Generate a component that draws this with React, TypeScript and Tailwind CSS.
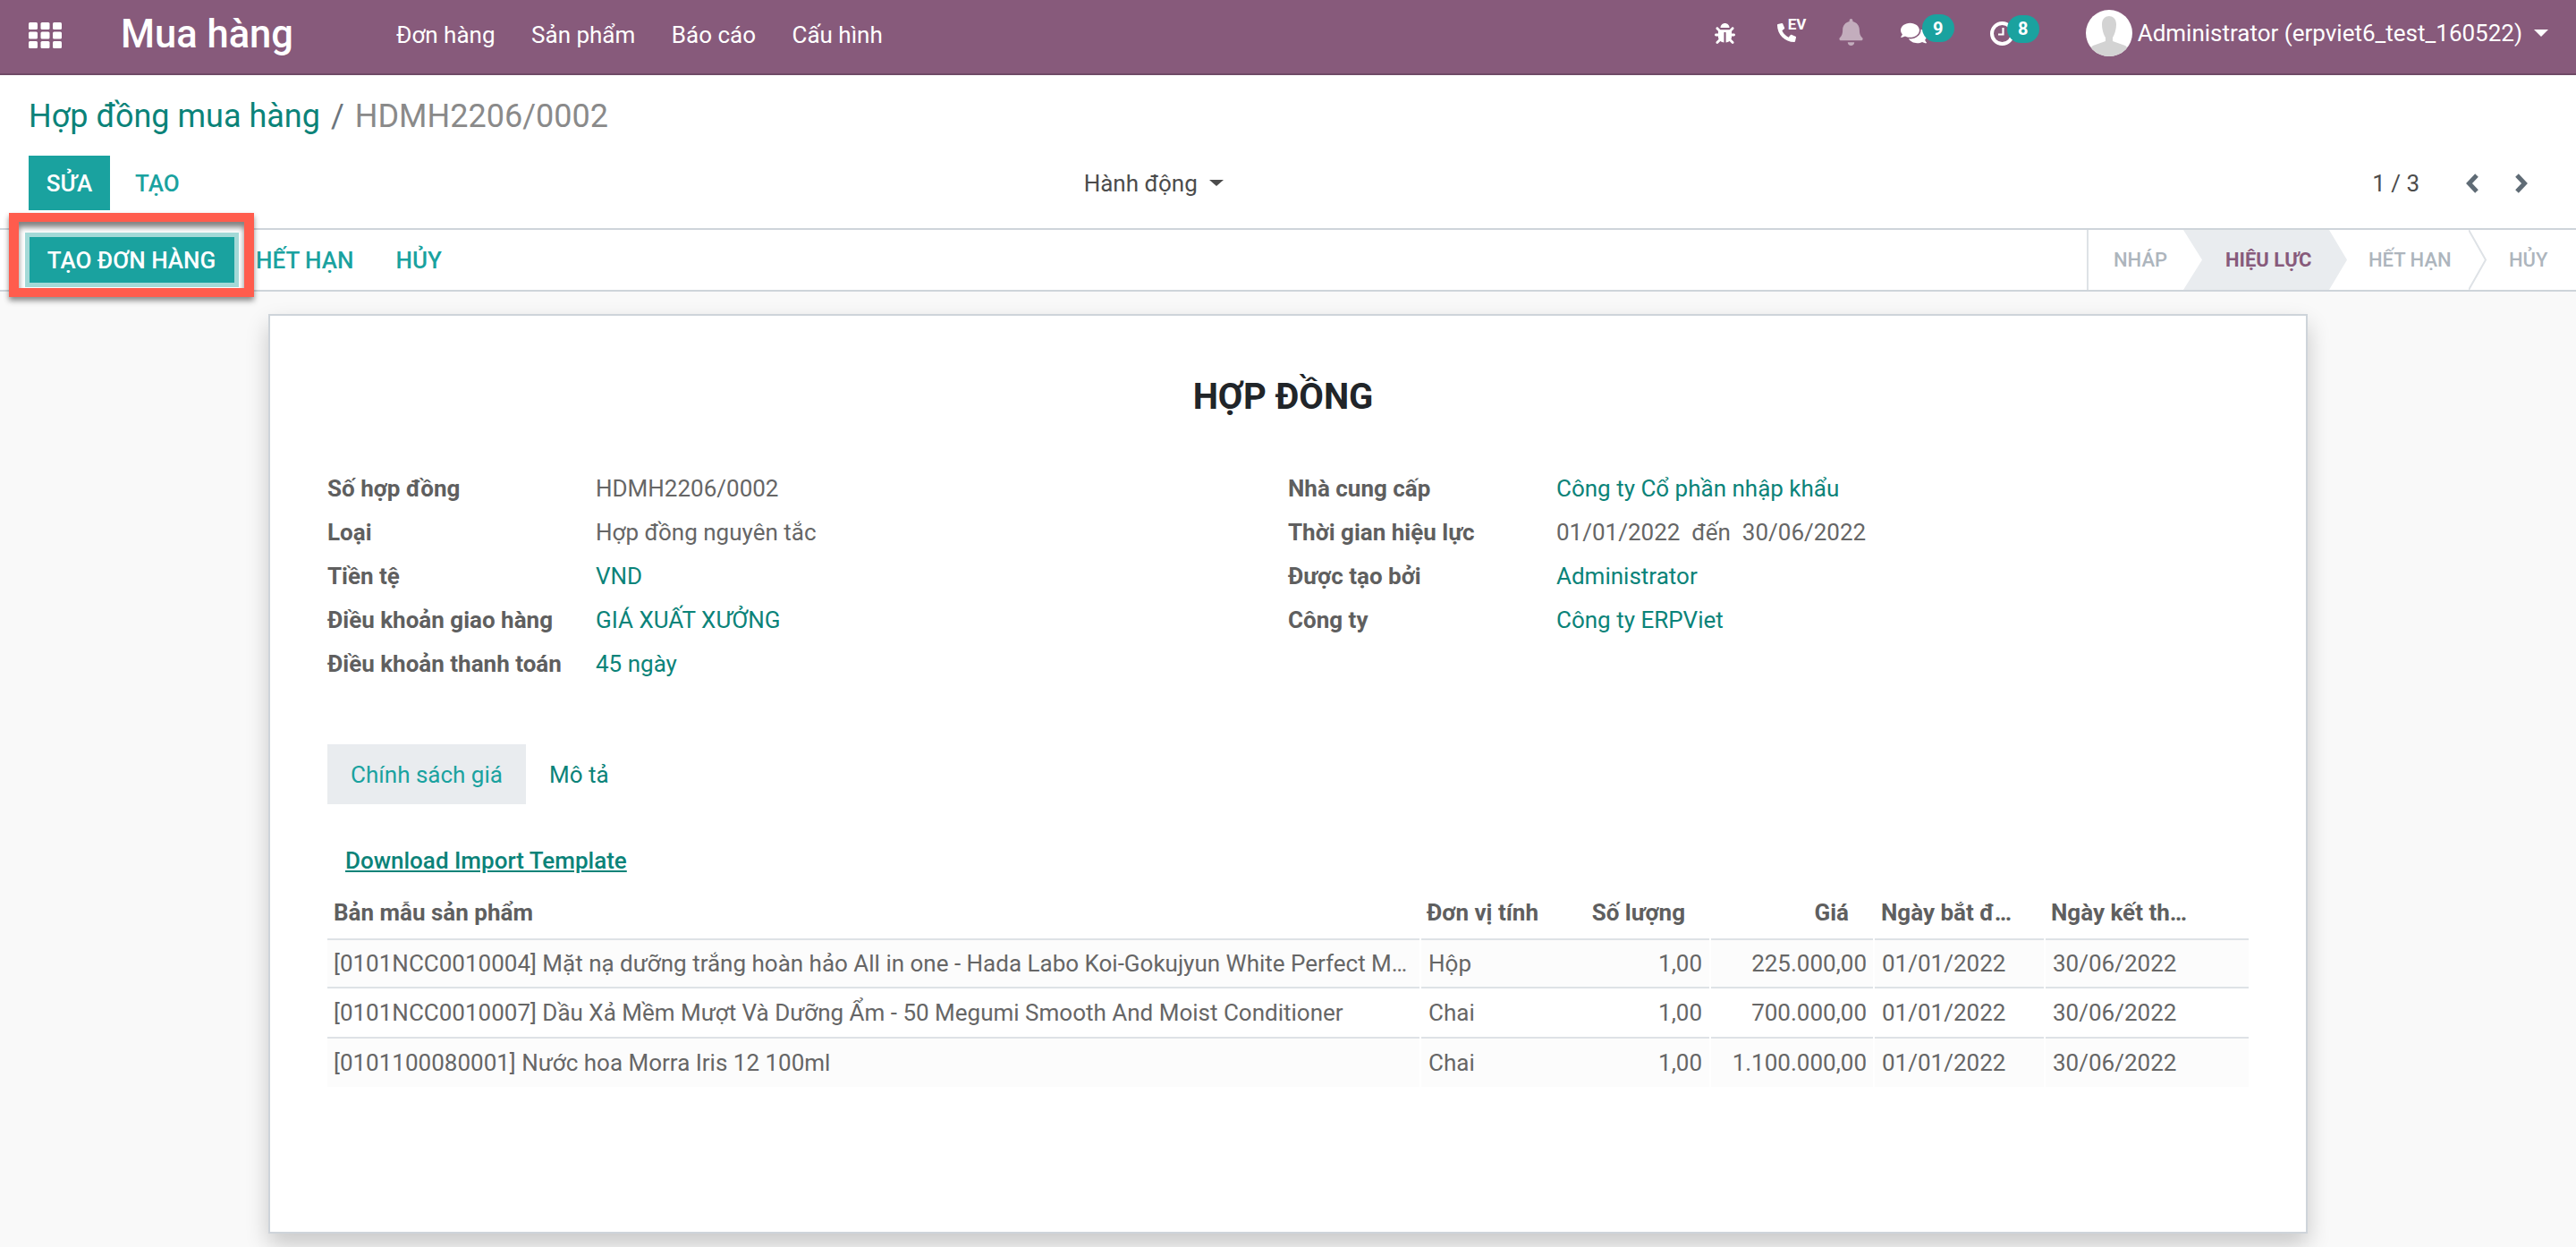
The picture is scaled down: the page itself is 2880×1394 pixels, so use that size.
import { FaBug, FaPhoneAlt, FaBell, FaComments } from "react-icons/fa";

const fields = {
  left: [
    { label: "Số hợp đồng", value: "HDMH2206/0002" },
    { label: "Loại", value: "Hợp đồng nguyên tắc" },
    { label: "Tiền tệ", value: "VND", link: true },
    { label: "Điều khoản giao hàng", value: "GIÁ XUẤT XƯỞNG", link: true },
    { label: "Điều khoản thanh toán", value: "45 ngày", link: true },
  ],
  right: [
    { label: "Nhà cung cấp", value: "Công ty Cổ phần nhập khẩu", link: true },
    { label: "Thời gian hiệu lực", value: "01/01/2022  đến  30/06/2022" },
    { label: "Được tạo bởi", value: "Administrator", link: true },
    { label: "Công ty", value: "Công ty ERPViet", link: true },
  ],
};

const rows = [
  { name: "[0101NCC0010004] Mặt nạ dưỡng trắng hoàn hảo All in one - Hada Labo Koi-Gokujyun White Perfect Mask", unit: "Hộp", price: "225.000,00" },
  { name: "[0101NCC0010007] Dầu Xả Mềm Mượt Và Dưỡng Ẩm - 50 Megumi Smooth And Moist Conditioner", unit: "Chai", price: "700.000,00" },
  { name: "[0101100080001] Nước hoa Morra Iris 12 100ml", unit: "Chai", price: "1.100.000,00" },
];

const FieldColumn = ({ items }: { items: { label: string; value: string; link?: boolean }[] }) => (
  <div className="flex flex-col">
    {items.map((f) => (
      <div key={f.label} className="flex h-[49px] items-center">
        <div className="w-[300px] font-bold text-[#5f5f5f]">{f.label}</div>
        <div className={f.link ? "whitespace-pre text-[#0b8379]" : "whitespace-pre text-[#666666]"}>{f.value}</div>
      </div>
    ))}
  </div>
);

const Avatar = () => (
  <svg viewBox="0 0 52 52" className="h-[52px] w-[52px]">
    <defs>
      <clipPath id="av">
        <circle cx="26" cy="26" r="26" />
      </clipPath>
    </defs>
    <g clipPath="url(#av)">
      <rect width="52" height="52" fill="#fff" />
      <path d="M18 16c0-6 4-9 8-9s8 3 8 9c0 6-2 12-4 15v4l14 5c2 1 4 4 4 12H4c0-8 2-11 4-12l14-5v-4c-2-3-4-9-4-15z" fill="#d3d3d3" />
    </g>
  </svg>
);

const Apps = () => (
  <svg viewBox="0 0 37 29" className="h-[29px] w-[37px]" fill="#fff">
    {[0, 13.5, 27].map((x) =>
      [0, 10.5, 21].map((y) => <rect key={`${x}-${y}`} x={x} y={y} width="10" height="8" rx="1.5" />)
    )}
  </svg>
);

const Clock = () => (
  <svg viewBox="0 0 27 27" className="h-[27px] w-[27px]" fill="none" stroke="#fff">
    <circle cx="13.5" cy="13.5" r="11.5" strokeWidth="4" />
    <path d="M14.5 7v7.5H9" strokeWidth="2.2" />
  </svg>
);

const Chevron = ({ d }: { d: string }) => (
  <svg viewBox="0 0 16 22" className="h-[22px] w-[16px]" fill="none" stroke="#5f6b75" strokeWidth="5">
    <path d={d} />
  </svg>
);

export default function App() {
  return (
    <div className="flex h-[1394px] flex-col overflow-hidden bg-white text-[26px] leading-none [font-family:Roboto,sans-serif]">
      {/* navbar */}
      <nav className="flex h-[84px] shrink-0 items-center border-b-2 border-[#6f4a66] bg-[#875a7b] pb-[4px] text-white">
        <div className="ml-[32px]">
          <Apps />
        </div>
        <div className="ml-[66px] text-[43.5px] font-medium">Mua hàng</div>
        <div className="ml-[115px] flex gap-[40.5px]">
          <span>Đơn hàng</span>
          <span>Sản phẩm</span>
          <span>Báo cáo</span>
          <span>Cấu hình</span>
        </div>
        <div className="ml-auto flex items-center pb-[4px]">
          <FaBug className="h-[23px] w-[23px]" />
          <div className="relative ml-[47px] h-[22px] w-[31px]">
            <FaPhoneAlt className="absolute left-0 top-0 h-[21px] w-[21px]" />
            <span className="absolute left-[12px] top-[-7px] text-[17px] font-bold">EV</span>
          </div>
          <FaBell className="ml-[37px] mt-[-3px] h-[30px] w-[29px] opacity-50" />
          <div className="relative ml-[41px] h-[26px] w-[29px]">
            <FaComments className="h-[26px] w-[29px]" />
            <span className="absolute left-[24px] top-[-8px] flex h-[31px] w-[36px] items-center justify-center rounded-full bg-[#1aa29f] text-[20px] font-bold text-white">9</span>
          </div>
          <div className="relative ml-[71px] h-[27px] w-[27px]">
            <Clock />
            <span className="absolute left-[19px] top-[-7px] flex h-[31px] w-[36px] items-center justify-center rounded-full bg-[#1aa29f] text-[20px] font-bold text-white">8</span>
          </div>
          <div className="ml-[80px]">
            <Avatar />
          </div>
          <span className="ml-[6px]">Administrator (erpviet6_test_160522)</span>
          <span className="ml-[13px] mr-[31px] h-0 w-0 border-x-[8px] border-t-[8px] border-x-transparent border-t-white" />
        </div>
      </nav>

      {/* breadcrumb */}
      <div className="flex h-[90px] shrink-0 items-center pl-[32px] pt-[2px] text-[36px]">
        <span className="text-[#0b8379]">Hợp đồng mua hàng</span>
        <span className="mx-[12px] text-[#6c757d]">/</span>
        <span className="text-[#8a8a8a]">HDMH2206/0002</span>
      </div>

      {/* buttons, action, pager */}
      <div className="flex h-[81px] shrink-0 items-start pl-[32px]">
        <button className="h-[61px] w-[91px] bg-[#1aa29f] font-medium text-white">SỬA</button>
        <button className="ml-[28px] h-[61px] font-medium text-[#1aa29f]">TẠO</button>
        <div className="ml-[1011px] flex h-[61px] items-center text-[#4c4c4c]">
          <span>Hành động</span>
          <span className="ml-[13px] h-0 w-0 border-x-[8px] border-t-[7px] border-x-transparent border-t-[#4c4c4c]" />
        </div>
        <div className="ml-auto flex h-[61px] items-center text-[#4c4c4c]">
          <span>1 / 3</span>
          <div className="ml-[51px]">
            <Chevron d="M13 2L4.5 11l8.5 9" />
          </div>
          <div className="ml-[39px] mr-[53px]">
            <Chevron d="M3 2l8.5 9L3 20" />
          </div>
        </div>
      </div>

      {/* status bar */}
      <div className="relative flex h-[71px] shrink-0 items-center border-y-2 border-[#ced4da] pl-[286px]">
        <div className="flex gap-[47px] font-medium text-[#1aa29f]">
          <span>HẾT HẠN</span>
          <span>HỦY</span>
        </div>
        <div className="ml-auto flex h-[67px] border-l-2 border-[#dee2e6] text-[22px] font-medium text-[#adb5bd]">
          <div className="flex w-[106px] items-center pl-[28px]">NHÁP</div>
          <div className="flex w-[183px] items-center bg-[#e9ecef] pl-[47px] font-bold text-[#875a7b] [clip-path:polygon(0_0,163px_0,183px_50%,163px_100%,0_100%,21px_50%)]">
            HIỆU LỰC
          </div>
          <div className="relative flex w-[156px] items-center pl-[24px]">
            HẾT HẠN
            <svg viewBox="0 0 20 67" className="absolute right-0 top-0 h-[67px] w-[20px]" fill="none" stroke="#dee2e6" strokeWidth="2">
              <path d="M0 0l19 33.5L0 67" />
            </svg>
          </div>
          <div className="flex w-[100px] items-center pl-[25px]">HỦY</div>
        </div>

        {/* red highlight around the main button */}
        <div className="absolute left-[10px] top-[-19px] flex h-[94px] w-[274px] items-end justify-center border-x-[11px] border-y-[10px] border-[#ff5c4d] bg-white pb-[6px] shadow-[0_4px_6px_rgba(0,0,0,0.45),inset_0_6px_6px_rgba(0,0,0,0.5)]">
          <button className="flex h-[51px] w-[229px] items-center justify-center whitespace-nowrap bg-[#1aa29f] font-medium text-white shadow-[0_0_0_5px_#a3d9d7]">
            TẠO ĐƠN HÀNG
          </button>
        </div>
      </div>

      {/* sheet */}
      <div className="flex-1 bg-[#f9f9f9] pt-[25px]">
        <div className="mx-auto flex h-[1028px] w-[2280px] flex-col border-2 border-[#ced4da] bg-white pl-[64px] pt-[69px] shadow-[0_12px_24px_rgba(0,0,0,0.2)]">
          <h1 className="mr-[75px] h-[44px] text-center text-[40px] font-bold leading-[44px] text-[#212529]">HỢP ĐỒNG</h1>

          <div className="mt-[55px] grid h-[245px] shrink-0 grid-cols-[1074px_1fr]">
            <FieldColumn items={fields.left} />
            <FieldColumn items={fields.right} />
          </div>

          {/* tabs */}
          <div className="mt-[66px] flex h-[67px] shrink-0">
            <div className="flex w-[222px] items-center justify-center bg-[#e9ecef] text-[#1aa29f]">Chính sách giá</div>
            <div className="flex items-center pl-[26px] text-[#0b8379]">Mô tả</div>
          </div>

          <a className="ml-[20px] mt-[46px] h-[34px] self-start font-medium leading-[34px] text-[#0b8379] underline">Download Import Template</a>

          {/* order lines */}
          <table className="mt-[11px] w-[2148px] table-fixed border-collapse text-left text-[#666666]">
            <colgroup>
              <col className="w-[1222px]" />
              <col className="w-[182px]" />
              <col className="w-[142px]" />
              <col className="w-[183px]" />
              <col className="w-[191px]" />
              <col className="w-[228px]" />
            </colgroup>
            <thead>
              <tr className="h-[60px] border-b-2 border-[#dee2e6] font-bold text-[#5f5f5f]">
                <th className="pl-[7px]">Bản mẫu sản phẩm</th>
                <th className="truncate pl-[7px]">Đơn vị tính</th>
                <th className="pr-[28px] text-right">Số lượng</th>
                <th className="pr-[28px] text-right">Giá</th>
                <th className="truncate pl-[8px] pr-[33px]">Ngày bắt đầu</th>
                <th className="truncate pl-[7px] pr-[68px]">Ngày kết thúc</th>
              </tr>
            </thead>
            <tbody>
              {rows.map((r, i) => (
                <tr key={r.name} className={i === 1 ? "h-[56px] border-b-2 border-[#dee2e6]" : i === 0 ? "h-[54px] border-b-2 border-[#dee2e6] bg-[#fcfcfc]" : "h-[55px] bg-[#fcfcfc]"}>
                  <td className="truncate border-r-2 border-white pl-[7px] pr-[8px]">{r.name}</td>
                  <td className="pl-[8px]">{r.unit}</td>
                  <td className="border-r-2 border-white pr-[8px] text-right">1,00</td>
                  <td className="border-r-2 border-white pr-[7px] text-right">{r.price}</td>
                  <td className="border-r-2 border-white pl-[8px]">01/01/2022</td>
                  <td className="pl-[8px]">30/06/2022</td>
                </tr>
              ))}
            </tbody>
          </table>
        </div>
      </div>
    </div>
  );
}
